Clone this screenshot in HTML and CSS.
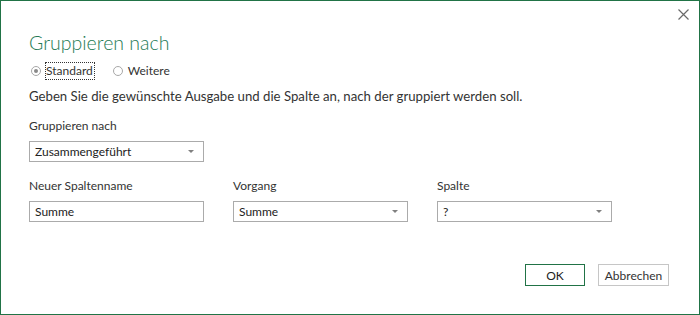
FILE: index.html
```html
<!DOCTYPE html>
<html lang="de">
<head>
<meta charset="utf-8">
<link rel="stylesheet" href="styles.css">
</head>
<body>
<div class="dialog">
  <div class="titlebar">
    <button class="close" aria-label="Schließen">
      <svg width="11" height="11" viewBox="0 0 11 11"><path d="M0.5 0.5 L10.5 10.5 M10.5 0.5 L0.5 10.5" stroke="#6a6a6a" stroke-width="1.2" fill="none"/></svg>
    </button>
  </div>
  <div class="content">
    <h1 class="title">Gruppieren nach</h1>
    <div class="radios">
      <label class="radio"><span class="dot checked"></span><span class="rlabel focus">Standard</span></label>
      <label class="radio"><span class="dot"></span><span class="rlabel">Weitere</span></label>
    </div>
    <p class="desc">Geben Sie die gewünschte Ausgabe und die Spalte an, nach der gruppiert werden soll.</p>
    <div class="group">
      <div class="label">Gruppieren nach</div>
      <div class="select"><span>Zusammengeführt</span><i class="arrow"></i></div>
    </div>
    <div class="fields">
      <div class="field">
        <div class="label">Neuer Spaltenname</div>
        <div class="input">Summe</div>
      </div>
      <div class="field">
        <div class="label">Vorgang</div>
        <div class="select"><span>Summe</span><i class="arrow"></i></div>
      </div>
      <div class="field">
        <div class="label">Spalte</div>
        <div class="select"><span>?</span><i class="arrow"></i></div>
      </div>
    </div>
  </div>
  <div class="footer">
    <button class="btn ok">OK</button>
    <button class="btn">Abbrechen</button>
  </div>
</div>
</body>
</html>
```
FILE: styles.css
```css
* { box-sizing: border-box; }
html, body { margin: 0; padding: 0; background: #fff; }
body { font-family: "Segoe UI", Lato, "Noto Sans", sans-serif; color: #333; }
.dialog {
  width: 700px; height: 315px;
  border: 1px solid #217346;
  display: flex; flex-direction: column;
}
.titlebar { display: flex; justify-content: flex-end; padding: 8px 10px 0 0; height: 22px; }
.close { border: 0; background: transparent; padding: 0; width: 11px; height: 11px; display: block; }
.close svg { display: block; }
.content { padding: 0 0 0 28px; flex: 1; }
.title {
  margin: 6px 0 0 0; font-weight: 300; font-size: 19.5px; line-height: 27px;
  color: #247a55;
}
.radios { display: flex; gap: 16px; margin-top: 6px; height: 18px; align-items: center; }
.radio { display: flex; align-items: center; font-size: 12px; color: #333; }
.dot {
  width: 10px; height: 10px; border-radius: 50%; border: 1px solid #a8a8a8;
  margin: 0 4px 0 2px; position: relative; background: #fff;
}
.dot.checked::after {
  content: ""; position: absolute; left: 2px; top: 2px; width: 4px; height: 4px;
  border-radius: 50%; background: #8a8a8a;
}
.rlabel { line-height: 16px; padding: 0 1px 0 0; border: 1px solid transparent; }
.rlabel.focus { border: 1px dotted #333; }
.desc { margin: 7px 0 0 0; font-size: 13.2px; line-height: 19px; color: #333; }
.group { margin-top: 12px; }
.label { font-size: 12px; line-height: 16px; color: #333; }
.select, .input {
  width: 175px; height: 21px; border: 1px solid #ababab; margin-top: 7px;
  display: flex; align-items: center; justify-content: space-between;
  padding: 0 9px 0 5px; font-size: 12px; color: #222; background: #fff;
}
.arrow {
  width: 0; height: 0; border-left: 3px solid transparent; border-right: 3px solid transparent;
  border-top: 3px solid #808080;
}
.fields { display: grid; grid-template-columns: 175px 175px 175px; column-gap: 29px; margin-top: 16px; }
.footer { display: flex; justify-content: flex-end; gap: 13px; padding: 0 30px 28px 0; }
.btn {
  height: 22px; font-family: inherit; font-size: 12px; color: #333; background: #fff;
  border: 1px solid #c6c6c6; padding: 0; width: 71px;
}
.btn.ok { border-color: #217346; width: 60px; color: #222; }
```
